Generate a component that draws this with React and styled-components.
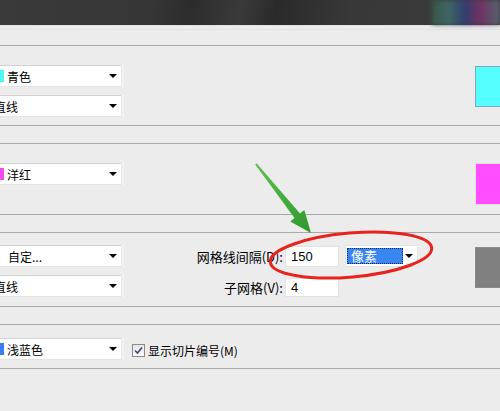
import React from "react";
import styled, { createGlobalStyle } from "styled-components";

const GlobalStyle = createGlobalStyle`
  html, body {
    margin: 0;
    padding: 0;
    background: #ececec;
  }
  body {
    font-family: "Noto Sans CJK SC", "Liberation Sans", sans-serif;
    font-size: 12px;
    color: #000;
  }
`;

const Page = styled.div`
  position: relative;
  width: 500px;
  height: 411px;
  overflow: hidden;
  background: #ececec;
`;

const TopBar = styled.div`
  height: 25px;
  display: flex;
  justify-content: flex-end;
  background: linear-gradient(
    100deg,
    #3a3a3a 0%,
    #363636 30%,
    #2c2c2c 38%,
    #3a3a3a 48%,
    #2a2a2a 55%,
    #383838 70%,
    #3c3c3c 100%
  );
  border-bottom: 1px solid #e2e2e2;
`;

const Thumbs = styled.div`
  width: 68px;
  height: 25px;
  background: linear-gradient(
    90deg,
    #3b5a4a 0%,
    #3f6f6a 25%,
    #2f3f7a 48%,
    #7a2f6a 70%,
    #5a6a7a 100%
  );
  filter: blur(2px);
  opacity: 0.85;
`;

const HeaderStrip = styled.div`
  height: 19px;
  border-top: 3px solid #ececec;
  box-sizing: border-box;
  background: linear-gradient(#e3e3e3 0 1px, #ececec 1px);
`;

const Group = styled.div`
  display: flex;
  align-items: flex-start;
  border-top: 1px solid #a8a8a8;
  border-bottom: 1px solid #a8a8a8;
  padding-top: ${(p) => p.$top}px;
  height: ${(p) => p.$height}px;
  box-sizing: border-box;
  margin-bottom: 17px;
`;

const LeftCol = styled.div`
  display: flex;
  flex-direction: column;
  gap: 8px;
  margin-left: -30px;
  width: 154px;
  flex-shrink: 0;
`;

const Select = styled.div`
  position: relative;
  display: flex;
  align-items: center;
  width: 154px;
  height: 22px;
  box-sizing: border-box;
  background: #fff;
  border: 1px solid #e4e4e4;
  border-top-color: #d2d2d2;
  padding-left: ${(p) => p.$indent}px;
  gap: 3px;
  white-space: nowrap;
`;

const Arrow = styled.span`
  position: absolute;
  right: ${(p) => p.$right || 6}px;
  top: 8px;
  width: 0;
  height: 0;
  border-left: 4px solid transparent;
  border-right: 4px solid transparent;
  border-top: 4px solid #000;
`;

const ButtonEdge = styled.span`
  position: absolute;
  right: -1px;
  top: -1px;
  bottom: -1px;
  width: 2px;
  background: #f3f3f3;
  border-left: 1px solid #e8e8e8;
`;

const Dot = styled.span`
  width: 12px;
  height: 12px;
  flex-shrink: 0;
  background: ${(p) => p.$color};
`;

const Swatch = styled.div`
  margin-left: auto;
  margin-top: ${(p) => p.$offset}px;
  margin-right: -6px;
  width: 31px;
  height: ${(p) => p.$h}px;
  box-sizing: border-box;
  background: ${(p) => p.$color};
  border: 1px solid ${(p) => p.$edge};
`;

const FieldGrid = styled.div`
  display: grid;
  grid-template-columns: 159px 54px 78px;
  column-gap: 2px;
  row-gap: 11px;
  align-items: center;
`;

const Label = styled.span`
  text-align: right;
  white-space: nowrap;
  font-size: 13px;
`;

const Input = styled.div`
  height: ${(p) => p.$h}px;
  box-sizing: border-box;
  background: #fff;
  border: 1px solid #e2e2e2;
  display: flex;
  align-items: center;
  padding-left: 5px;
  font-family: "Liberation Sans", sans-serif;
  font-size: 13px;
`;

const Unit = styled.div`
  position: relative;
  width: 73px;
  height: 22px;
  margin-left: 4px;
  box-sizing: border-box;
  background: #fff;
  border: 1px solid #e2e2e2;
  padding: 2px 0 0 1px;
`;

const Highlight = styled.div`
  width: 56px;
  height: 16px;
  box-sizing: border-box;
  background: #3a86f0;
  border: 1px dotted #1a2a60;
  color: #fff;
  padding-left: 3px;
  line-height: 14px;
  font-size: 13px;
`;

const CheckRow = styled.label`
  display: flex;
  align-items: center;
  gap: 3px;
  margin-left: 8px;
  margin-top: 4px;
`;

const Box = styled.span`
  width: 13px;
  height: 13px;
  box-sizing: border-box;
  border: 1px solid #8a8a8a;
  background: linear-gradient(#e6e6e6, #fafafa);
  display: flex;
  align-items: center;
  justify-content: center;
`;

const Overlay = styled.svg`
  position: absolute;
  left: 0;
  top: 0;
  pointer-events: none;
`;

const Drop = ({ indent, color, children }) => (
  <Select $indent={indent}>
    {color && <Dot $color={color} />}
    <span>{children}</span>
    <Arrow />
    <ButtonEdge />
  </Select>
);

export default function App() {
  return (
    <Page>
      <GlobalStyle />
      <TopBar>
        <Thumbs />
      </TopBar>
      <HeaderStrip />

      <Group $top={19} $height={81}>
        <LeftCol>
          <Drop indent={21} color="#4ff6f2">青色</Drop>
          <Drop indent={23}>直线</Drop>
        </LeftCol>
        <Swatch $offset={1} $h={41} $color="#55ffff" $edge="#7fa8b8" />
      </Group>

      <Group $top={19} $height={72}>
        <LeftCol>
          <Drop indent={21} color="#f24cf0">洋红</Drop>
        </LeftCol>
        <Swatch $offset={0} $h={42} $color="#ff4dff" $edge="#e0e0e0" />
      </Group>

      <Group $top={12} $height={75}>
        <LeftCol>
          <Drop indent={37}>自定...</Drop>
          <Drop indent={23}>直线</Drop>
        </LeftCol>
        <FieldGrid>
          <Label>网格线间隔(D):</Label>
          <Input $h={21}>150</Input>
          <Unit>
            <Highlight>像素</Highlight>
            <Arrow $right={4} />
          </Unit>
          <Label>子网格(V):</Label>
          <Input $h={19}>4</Input>
        </FieldGrid>
        <Swatch $offset={2} $h={41} $color="#808080" $edge="#8a8a8a" />
      </Group>

      <Group $top={13} $height={45}>
        <LeftCol>
          <Drop indent={21} color="#3a7df0">浅蓝色</Drop>
        </LeftCol>
        <CheckRow>
          <Box>
            <svg width="9" height="9" viewBox="0 0 9 9">
              <path d="M1 4.5 L3.5 7 L8 1.5" fill="none" stroke="#3a4a7a" strokeWidth="1.6" />
            </svg>
          </Box>
          <span>显示切片编号(M)</span>
        </CheckRow>
      </Group>

      <Overlay width="500" height="411" viewBox="0 0 500 411">
        <defs>
          <linearGradient id="grn" x1="0" y1="0" x2="1" y2="1">
            <stop offset="0" stopColor="#5cc04a" />
            <stop offset="1" stopColor="#2e9a2e" />
          </linearGradient>
        </defs>
        <ellipse
          cx="351"
          cy="255"
          rx="81"
          ry="22"
          transform="rotate(-5 351 255)"
          fill="none"
          stroke="#e8231e"
          strokeWidth="3"
        />
        <polygon
          points="256.8,163.4 300,213.6 304.3,210.1 311,233 290.2,221.4 294.5,217.9 255.2,164.6"
          fill="url(#grn)"
        />
      </Overlay>
    </Page>
  );
}
